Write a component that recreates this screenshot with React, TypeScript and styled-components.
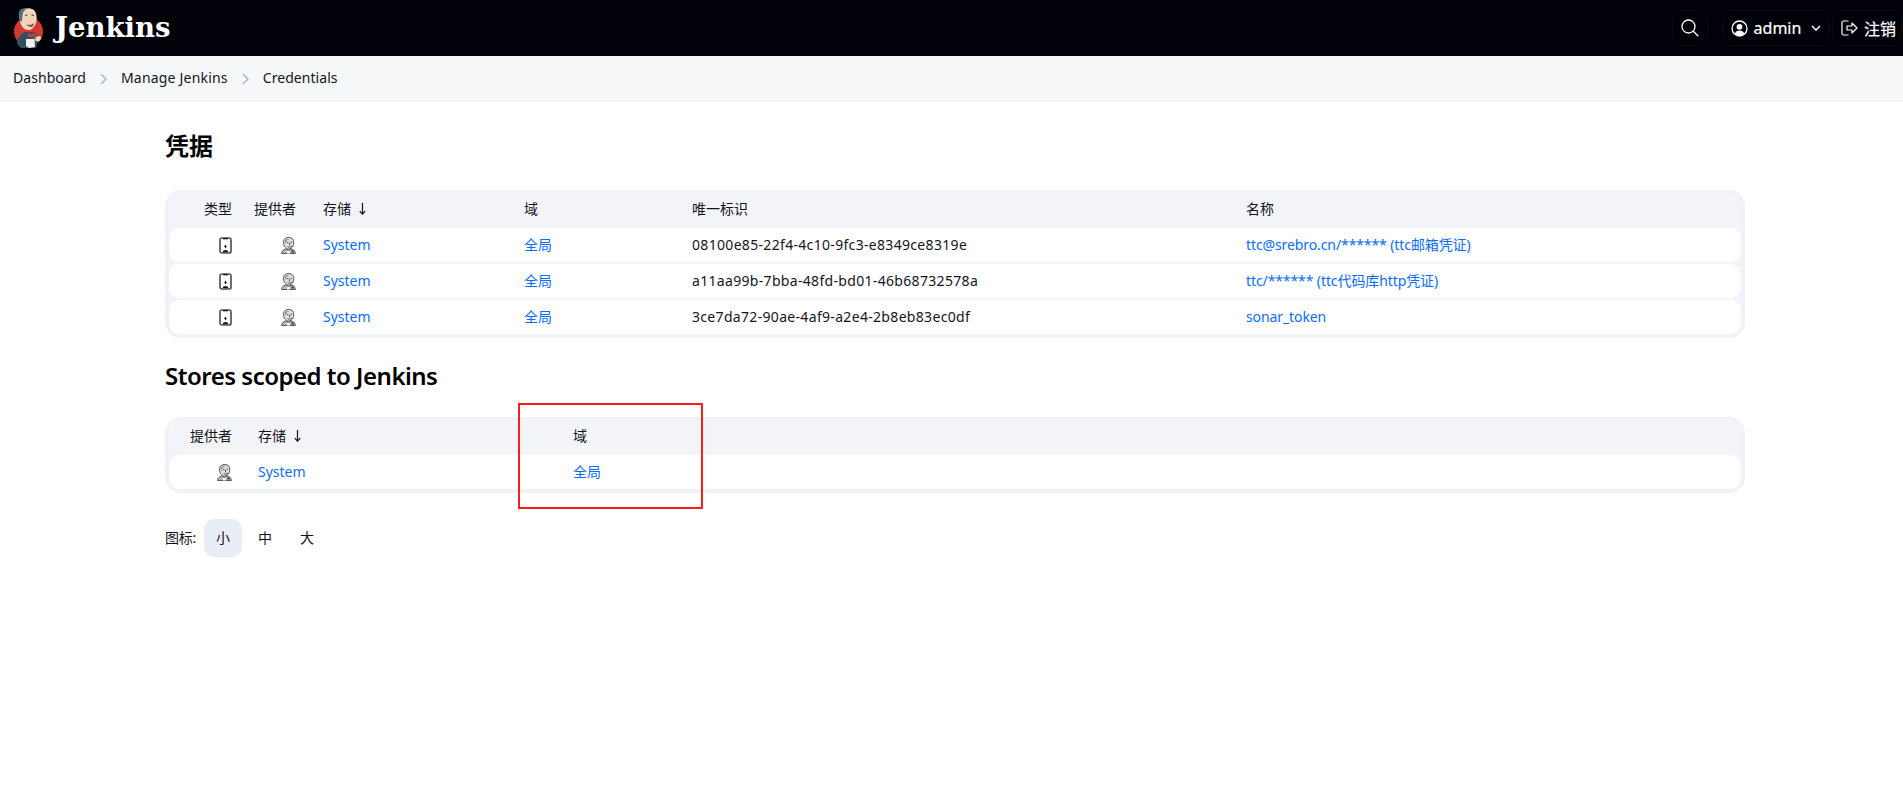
import React from "react";
import styled, { createGlobalStyle } from "styled-components";

const Global = createGlobalStyle`
  html, body { margin: 0; padding: 0; background: #fff; }
  body { font-family: "Noto Sans", "Noto Sans CJK SC", sans-serif; font-size: 14px; color: #14141f; }
`;

const Page = styled.div`
  position: relative;
  width: 1903px;
  height: 790px;
  overflow: hidden;
`;

const TopBar = styled.header`
  height: 56px;
  background: #01010a;
  display: flex;
  align-items: center;
  padding-left: 14px;
  padding-right: 1px;
`;

const Brand = styled.div`
  display: flex;
  align-items: center;
  gap: 11px;
  flex: 1;
`;

const BrandName = styled.span`
  font-family: "DejaVu Serif", "Liberation Serif", serif;
  font-weight: 700;
  font-size: 27.500px;
  color: #fff;
  line-height: 1;
  margin-top: -1px;
`;

const NavButton = styled.div<{ $w: number }>`
  width: ${(p) => p.$w}px;
  height: 36px;
  box-sizing: border-box;
  border: 1px solid #0a0a13;
  border-radius: 10px;
  display: flex;
  align-items: center;
  justify-content: center;
  gap: 6px;
  color: #fff;
  font-size: 16px;
  font-weight: 400;
  -webkit-text-stroke: 0.2px #fff;
  margin-left: 2px;
  svg { flex: none; }
`;

const SearchButton = styled(NavButton)`
  margin-right: 12px;
`;

const LogoutButton = styled(NavButton)`
  padding-left: 3px;
`;

const ChevronWrap = styled.span`
  display: flex;
  margin-left: 4px;
`;

const Crumbs = styled.nav`
  height: 46px;
  background: #f6f7f9;
  display: flex;
  align-items: center;
  padding: 0 0 4px 13px;
  box-sizing: border-box;
  color: #14141f;
`;

const Crumb = styled.span<{ $spacing?: number }>`
  letter-spacing: ${(p) => p.$spacing ?? 0.05}px;
`;

const CrumbSep = styled.svg`
  margin: 4px 14px 0;
`;

const Main = styled.main`
  padding: 0 158px 0 165px;
`;

const Heading = styled.h1`
  margin: 0;
  font-size: 24px;
  line-height: 32px;
  font-weight: 700;
  color: #000;
`;

const FirstHeading = styled(Heading)`
  padding-top: 28px;
`;

const SecondHeading = styled(Heading)`
  padding-top: 22px;
  font-weight: 600;
  letter-spacing: -0.5px;
`;

const Frame = styled.div<{ $top: number }>`
  margin-top: ${(p) => p.$top}px;
  border: 4px solid #eff2f6;
  border-top-width: 2px;
  border-radius: 16px;
  background: #f2f4f7;
  box-sizing: border-box;
`;

const Table = styled.table`
  width: 1572px;
  table-layout: fixed;
  border-collapse: separate;
  border-spacing: 0 2px;
  margin: -2px 0;
  font-size: 14px;
`;

const Col = styled.col<{ $w: number }>`
  width: ${(p) => p.$w}px;
`;

const HeadCell = styled.th<{ $right?: number }>`
  height: 34px;
  box-sizing: border-box;
  font-weight: 400;
  color: #14141f;
  padding: 0 ${(p) => p.$right ?? 0}px 3px ${(p) => (p.$right ? 0 : 17)}px;
  text-align: ${(p) => (p.$right ? "right" : "left")};
  white-space: nowrap;
`;

const SortArrow = styled.svg`
  margin-left: 8px;
  vertical-align: -1px;
`;

const Cell = styled.td<{ $right?: number }>`
  height: 34px;
  box-sizing: border-box;
  padding: 0 ${(p) => p.$right ?? 0}px 2px ${(p) => (p.$right ? 0 : 17)}px;
  background: #fff;
  text-align: ${(p) => (p.$right ? "right" : "left")};
  white-space: nowrap;
  color: #14141f;
  &:first-child { border-radius: 10px 0 0 10px; }
  &:last-child { border-radius: 0 10px 10px 0; }
  svg { vertical-align: middle; }
`;

const IdCell = styled(Cell)`
  letter-spacing: 0.32px;
`;

const Link = styled.a`
  color: #0b6cff;
  text-decoration: none;
`;

const NameLink = styled(Link)`
  letter-spacing: -0.1px;
`;

const SizeRow = styled.div`
  display: flex;
  align-items: center;
  margin-top: 26px;
  color: #14141f;
`;

const SizeLabel = styled.span`
  width: 39px;
  letter-spacing: -0.3px;
  margin-top: -2px;
`;

const SizeOption = styled.div<{ $active?: boolean }>`
  width: 38px;
  height: 38px;
  box-sizing: border-box;
  padding-bottom: 2px;
  margin-right: 4px;
  border-radius: 10px;
  display: flex;
  align-items: center;
  justify-content: center;
  background: ${(p) => (p.$active ? "#e9edf6" : "transparent")};
`;

const Annotation = styled.div`
  position: absolute;
  left: 518px;
  top: 403px;
  width: 185px;
  height: 106px;
  box-sizing: border-box;
  border: 2px solid #f5201a;
  pointer-events: none;
`;

const Butler = () => (
  <svg width="30" height="40" viewBox="0 0 30 40">
    <circle cx="14.5" cy="23.5" r="14.5" fill="#d33833" />
    <path d="M3 36c0-6 3-10 8-12l9 0c3 2 4 4 4 8l-2 8H7z" fill="#335061" />
    <path d="M6 2.500C9-.5 17-.5 20 2c2.500 2.500 3 7 2.500 10.500-.5 5-3.500 9-7.500 9.500-4 .2-7-2.500-8.500-6.500C5.500 11 4.500 5.500 6 2.500z" fill="#f0d6b7" />
    <path d="M6 2.500C8 .5 12-.2 15 0c-3 .7-6 2.500-6.500 7.500l-.5 5.500-2 .5C5 10 4.500 5 6 2.500z" fill="#49728b" />
    <path d="M11 7.500l2.500-.7M17.500 7l2.500.3" stroke="#49312a" strokeWidth="1" />
    <path d="M12 15.500c2 2 5 2 8-.5l-1 3.500c-2 1-5 .5-7-3z" fill="#81553f" />
    <path d="M14 25l3.500 1.500L21 24l1 4-4 .5-1 1-3-1.500z" fill="#d33833" />
    <path d="M19 28l3-1 1 6-4 1z" fill="#6d6b6d" opacity=".6" />
    <path d="M12 31h8.500l.5 8-6 1-3-2z" fill="#efefef" />
    <path d="M22 29c2-1 5-1 5 .5s-1 3.500-3 4l-3-1z" fill="#f0d6b7" />
  </svg>
);

const SearchIcon = () => (
  <svg width="18" height="18" viewBox="0 0 18 18" fill="none" stroke="#fff" strokeWidth="1.300">
    <circle cx="7.500" cy="7.500" r="6.500" />
    <path d="M12.300 12.300L17.300 17.300" />
  </svg>
);

const UserIcon = () => (
  <svg width="17" height="17" viewBox="0 0 17 17">
    <circle cx="8.500" cy="8.500" r="7.500" fill="none" stroke="#fff" strokeWidth="1.300" />
    <circle cx="8.500" cy="6.800" r="2.900" fill="#fff" />
    <path d="M3.600 13.500c1-2 2.800-3 4.900-3s3.900 1 4.900 3c-1.300 1.300-3 2-4.900 2s-3.600-.7-4.900-2z" fill="#fff" />
  </svg>
);

const Chevron = () => (
  <svg width="10" height="6" viewBox="0 0 10 6" fill="none" stroke="#fff" strokeWidth="1.500">
    <path d="M1 1l4 4 4-4" />
  </svg>
);

const LogoutIcon = () => (
  <svg width="17" height="16" viewBox="0 0 17 16" fill="none" stroke="#fff" strokeWidth="1.200" strokeLinejoin="round">
    <path d="M7.500 1H2.500C1.500 1 1 1.500 1 2.500v11c0 1 .5 1.500 1.500 1.500h5" />
    <path d="M6 6h5V3l5 5-5 5v-3H6z" />
  </svg>
);

const CrumbChevron = () => (
  <CrumbSep width="7" height="12" viewBox="0 0 7 12" fill="none" stroke="#a9b7cf" strokeWidth="1.500">
    <path d="M1 1l5 5-5 5" />
  </CrumbSep>
);

const ArrowDown = () => (
  <SortArrow width="7" height="12" viewBox="0 0 7 12" fill="none" stroke="#14141f" strokeWidth="1.200">
    <path d="M3.500 0v11M.8 8.200l2.700 3 2.700-3" />
  </SortArrow>
);

const PhoneIcon = () => (
  <svg width="13" height="17" viewBox="0 0 13 17">
    <rect x="1" y="1" width="11" height="15" rx="1.800" fill="#fff" stroke="#55555e" strokeWidth="1.700" />
    <rect x="4" y="1" width="5" height="1.300" fill="#14141f" />
    <path d="M6.500 8v3M5.300 9.500h2.400" stroke="#14141f" strokeWidth="1" />
    <path d="M3.500 15.200c.3-1.500 1.500-2.200 3-2.200s2.700.7 3 2.200z" fill="#14141f" />
  </svg>
);

const ProviderIcon = () => (
  <svg width="15" height="17" viewBox="0 0 15 17">
    <path d="M3.500 9.500C2 6.500 2.300 3 4 1.500 6 0 10 .2 11.500 1.800c1.500 1.700 1.700 5 .5 7.200-1 2-2.500 3-4.200 3C6 12 4.500 11.200 3.500 9.500z" fill="#dedee1" stroke="#5a5a62" strokeWidth="1" />
    <path d="M4 3.500l2.500-1.500 2 .3-3 1.200-.5 4z" fill="#7b7b83" />
    <path d="M6 5.500h1.500M9.500 5.300h1.500M8.500 6v2.300M6.500 9.500c1.500.8 3 .8 4.500-.4" stroke="#33333b" strokeWidth=".8" fill="none" />
    <path d="M.6 16.500c.2-2.500 1.500-3.700 4-4.500l3 1.300 3-1.300c2.300.8 3.500 2 3.800 4.500z" fill="#b5b5ba" stroke="#5a5a62" strokeWidth="1" />
    <path d="M6 14h3v2.500H6z" fill="#f7f7f8" />
    <path d="M10.500 13.500h2v2h-2z" fill="#33333b" />
  </svg>
);

const rows = [
  { id: "08100e85-22f4-4c10-9fc3-e8349ce8319e", name: "ttc@srebro.cn/****** (ttc邮箱凭证)" },
  { id: "a11aa99b-7bba-48fd-bd01-46b68732578a", name: "ttc/****** (ttc代码库http凭证)" },
  { id: "3ce7da72-90ae-4af9-a2e4-2b8eb83ec0df", name: "sonar_token" },
];

export default function App() {
  return (
    <Page>
      <Global />
      <TopBar>
        <Brand>
          <Butler />
          <BrandName>Jenkins</BrandName>
        </Brand>
        <SearchButton $w={36}>
          <SearchIcon />
        </SearchButton>
        <NavButton $w={108}>
          <UserIcon />
          <span>admin</span>
          <ChevronWrap>
            <Chevron />
          </ChevronWrap>
        </NavButton>
        <LogoutButton $w={70}>
          <LogoutIcon />
          <span>注销</span>
        </LogoutButton>
      </TopBar>
      <Crumbs>
        <Crumb>Dashboard</Crumb>
        <CrumbChevron />
        <Crumb $spacing={0.2}>Manage Jenkins</Crumb>
        <CrumbChevron />
        <Crumb>Credentials</Crumb>
      </Crumbs>
      <Main>
        <FirstHeading>凭据</FirstHeading>
        <Frame $top={28}>
          <Table>
            <colgroup>
              <Col $w={71} />
              <Col $w={66} />
              <Col $w={201} />
              <Col $w={168} />
              <Col $w={554} />
              <Col $w={512} />
            </colgroup>
            <thead>
              <tr>
                <HeadCell $right={8}>类型</HeadCell>
                <HeadCell $right={10}>提供者</HeadCell>
                <HeadCell>
                  存储
                  <ArrowDown />
                </HeadCell>
                <HeadCell>域</HeadCell>
                <HeadCell>唯一标识</HeadCell>
                <HeadCell>名称</HeadCell>
              </tr>
            </thead>
            <tbody>
              {rows.map((r) => (
                <tr key={r.id}>
                  <Cell $right={8}>
                    <PhoneIcon />
                  </Cell>
                  <Cell $right={10}>
                    <ProviderIcon />
                  </Cell>
                  <Cell>
                    <Link>System</Link>
                  </Cell>
                  <Cell>
                    <Link>全局</Link>
                  </Cell>
                  <IdCell>{r.id}</IdCell>
                  <Cell>
                    <NameLink>{r.name}</NameLink>
                  </Cell>
                </tr>
              ))}
            </tbody>
          </Table>
        </Frame>
        <SecondHeading>Stores scoped to Jenkins</SecondHeading>
        <Frame $top={25}>
          <Table>
            <colgroup>
              <Col $w={72} />
              <Col $w={315} />
              <Col $w={1185} />
            </colgroup>
            <thead>
              <tr>
                <HeadCell $right={9}>提供者</HeadCell>
                <HeadCell>
                  存储
                  <ArrowDown />
                </HeadCell>
                <HeadCell>域</HeadCell>
              </tr>
            </thead>
            <tbody>
              <tr>
                <Cell $right={9}>
                  <ProviderIcon />
                </Cell>
                <Cell>
                  <Link>System</Link>
                </Cell>
                <Cell>
                  <Link>全局</Link>
                </Cell>
              </tr>
            </tbody>
          </Table>
        </Frame>
        <SizeRow>
          <SizeLabel>图标:</SizeLabel>
          <SizeOption $active>小</SizeOption>
          <SizeOption>中</SizeOption>
          <SizeOption>大</SizeOption>
        </SizeRow>
      </Main>
      <Annotation />
    </Page>
  );
}
